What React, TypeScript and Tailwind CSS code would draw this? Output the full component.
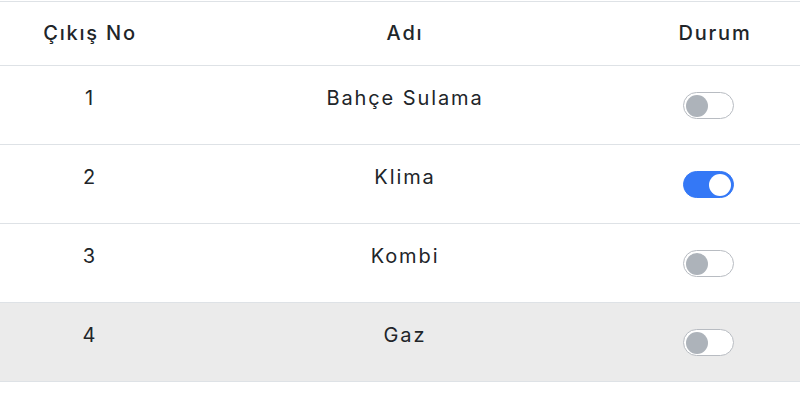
import React from "react";

const rows = [
  { no: 1, name: "Bahçe Sulama", on: false },
  { no: 2, name: "Klima", on: true },
  { no: 3, name: "Kombi", on: false },
  { no: 4, name: "Gaz", on: false, hover: true },
];

function Toggle({ on }: { on: boolean }) {
  return (
    <span
      className={`mr-[13px] mt-[26px] flex h-[27px] w-[51px] items-center rounded-full border px-[2px] ${
        on ? "justify-end border-[#3478f6] bg-[#3478f6]" : "justify-start border-[#b8bcc2] bg-white"
      }`}
    >
      <span className={`h-[22px] w-[22px] rounded-full ${on ? "bg-white" : "bg-[#adb3ba]"}`} />
    </span>
  );
}

export default function App() {
  return (
    <div className="h-[400px] w-[800px] bg-white font-['Inter',sans-serif] text-[#212529]">
      <div className="h-[1px]" />
      <div className="grid grid-cols-[180px_450px_170px] border-y border-[#dee2e6] text-[20px] font-medium tracking-[1.8px]">
        <div className="flex h-[63px] items-center justify-center pb-[2px]">Çıkış No</div>
        <div className="flex h-[63px] items-center justify-center pb-[2px]">Adı</div>
        <div className="flex h-[63px] items-center justify-center pb-[2px]">Durum</div>
      </div>
      {rows.map((r) => (
        <div
          key={r.no}
          className={`grid grid-cols-[180px_450px_170px] border-b border-[#dee2e6] text-[20px] tracking-[1.9px] ${
            r.hover ? "bg-[#ebebeb]" : "bg-white"
          }`}
        >
          <div className="flex h-[78px] justify-center pt-[17px]">{r.no}</div>
          <div className="flex h-[78px] justify-center pt-[17px]">{r.name}</div>
          <div className="flex h-[78px] justify-center">
            <Toggle on={r.on} />
          </div>
        </div>
      ))}
    </div>
  );
}
